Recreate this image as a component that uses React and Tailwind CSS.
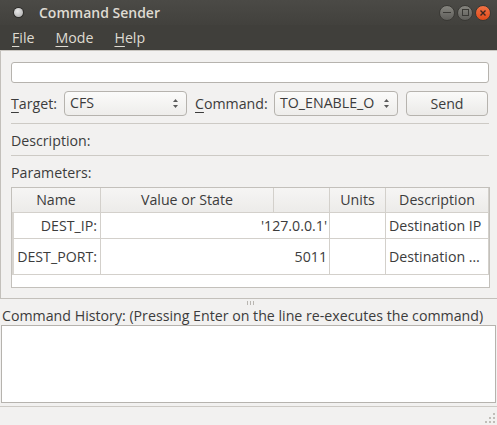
import React from "react";

function Combo({ value, width }) {
  return (
    <div
      className={`${width} h-[25px] flex items-center justify-between rounded-[4px] border border-[#b6b3ae] bg-gradient-to-b from-[#fbfbfa] to-[#eeedeb] pl-[5px] pr-[7px] text-[#3c3c3c]`}
    >
      <span className="leading-none">{value}</span>
      <svg width="7" height="11" viewBox="0 0 7 11">
        <path d="M3.5 1 L6 4 L1 4 Z" fill="#5a5a5a" />
        <path d="M3.5 10 L6 7 L1 7 Z" fill="#5a5a5a" />
      </svg>
    </div>
  );
}

function U({ c, rest }) {
  return (
    <span>
      <span className="underline underline-offset-[3px] decoration-1">{c}</span>
      {rest}
    </span>
  );
}

export default function App() {
  const cell = "border-r border-b border-[#d3d0cb]";
  return (
    <div
      className="w-[497px] h-[425px] bg-[#f2f1f0] flex flex-col overflow-hidden text-[14.2px] text-[#3c3c3c]"
      style={{ fontFamily: '"Open Sans", "Noto Sans", sans-serif' }}
    >
      {/* Title bar */}
      <div className="h-[25px] flex items-center bg-gradient-to-b from-[#4b4a46] to-[#42413d] relative">
        <div className="ml-[14px] w-[9px] h-[9px] rounded-full bg-[radial-gradient(circle_at_40%_35%,#e8e8e8,#a8a8a8)] shadow-[0_0_0_1px_#2e2d2a]" />
        <span className="ml-[16px] text-[#dfdbd2] font-semibold text-[14px] leading-none">Command Sender</span>
        <div className="ml-auto mr-[6px] flex items-center gap-[2px]">
          <div className="w-[16px] h-[16px] rounded-full bg-gradient-to-b from-[#86857f] to-[#5f5e5a] border border-[#3a3935] flex items-center justify-center">
            <div className="w-[8px] h-[1.5px] bg-[#3a3935]" />
          </div>
          <div className="w-[16px] h-[16px] rounded-full bg-gradient-to-b from-[#86857f] to-[#5f5e5a] border border-[#3a3935] flex items-center justify-center">
            <div className="w-[7px] h-[7px] border border-[#3a3935]" />
          </div>
          <div className="w-[16px] h-[16px] rounded-full bg-gradient-to-b from-[#f37244] to-[#df4a17] border border-[#3a3935] flex items-center justify-center">
            <svg width="8" height="8" viewBox="0 0 8 8">
              <path d="M1.5 1.5 L6.5 6.5 M6.5 1.5 L1.5 6.5" stroke="#3a2620" strokeWidth="1.4" />
            </svg>
          </div>
        </div>
      </div>
      {/* Menu bar */}
      <div className="h-[26px] flex items-center bg-[#403f3b] text-[#dfdbd2] border-b border-[#c9c6c1]">
        <span className="ml-[12px]"><U c="F" rest="ile" /></span>
        <span className="ml-[21px]"><U c="M" rest="ode" /></span>
        <span className="ml-[21px]"><U c="H" rest="elp" /></span>
      </div>
      {/* Main panel */}
      <div className="h-[248px] border-l border-b border-[#c3c0bb] flex flex-col pl-[10px] pr-[8px] pt-[11px]">
        <div className="h-[21px] w-[478px] rounded-[3px] border border-[#b6b3ae] bg-white" />
        <div className="mt-[8px] h-[25px] flex items-center">
          <span className="w-[53px]"><U c="T" rest="arget:" /></span>
          <Combo value="CFS" width="w-[123px]" />
          <span className="ml-[8px] w-[79px]"><U c="C" rest="ommand:" /></span>
          <Combo value="TO_ENABLE_O" width="w-[124px]" />
          <div className="ml-[8px] w-[82px] h-[25px] rounded-[4px] border border-[#b6b3ae] bg-gradient-to-b from-[#fafaf9] to-[#ebeae8] flex items-center justify-center">
            Send
          </div>
        </div>
        <div className="mt-[7px] h-px w-[478px] bg-[#cdcac5]" />
        <div className="mt-[8px] h-[18px] leading-[18px]">Description:</div>
        <div className="mt-[5px] h-px w-[478px] bg-[#cdcac5]" />
        <div className="mt-[8px] h-[18px] leading-[18px]">Parameters:</div>
        {/* Table */}
        <div className="mt-[5px] w-[479px] h-[101px] border border-[#c3c0bb] bg-white flex flex-col">
          <div className="grid grid-cols-[89px_173px_56px_56px_103px] h-[25px] bg-gradient-to-b from-[#f6f5f4] to-[#ecebe9]">
            <div className={`${cell} flex items-center justify-center`}>Name</div>
            <div className={`${cell} flex items-center justify-center`}>Value or State</div>
            <div className={`${cell}`} />
            <div className={`${cell} flex items-center justify-center`}>Units</div>
            <div className={`${cell} flex items-center justify-center`}>Description</div>
          </div>
          <div className="grid grid-cols-[89px_229px_56px_103px] h-[26px]">
            <div className={`${cell} border-l-2 border-l-[#d8d5d0] flex items-center justify-end pr-[3px]`}>DEST_IP:</div>
            <div className={`${cell} flex items-center justify-end pr-[2px]`}>'127.0.0.1'</div>
            <div className={cell} />
            <div className={`${cell} flex items-center pl-[3px] whitespace-nowrap overflow-hidden`}>Destination IP</div>
          </div>
          <div className="grid grid-cols-[89px_229px_56px_103px] h-[36px]">
            <div className={`${cell} border-l-2 border-l-[#d8d5d0] flex items-center justify-end pr-[3px]`}>DEST_PORT:</div>
            <div className={`${cell} flex items-center justify-end pr-[2px]`}>5011</div>
            <div className={cell} />
            <div className={`${cell} flex items-center pl-[3px] whitespace-nowrap overflow-hidden`}>Destination …</div>
          </div>
        </div>
      </div>
      {/* Splitter */}
      <div className="h-[7px] flex items-center justify-center gap-[2px] pl-[4px]">
        <div className="w-px h-[4px] bg-[#b9b6b1]" />
        <div className="w-px h-[4px] bg-[#b9b6b1]" />
        <div className="w-px h-[4px] bg-[#b9b6b1]" />
      </div>
      <div className="h-[19px] leading-[19px] pl-[2px] whitespace-nowrap">
        Command History: (Pressing Enter on the line re-executes the command)
      </div>
      <div className="ml-px w-[495px] h-[78px] border border-[#b6b3ae] bg-white" />
      <div className="mt-[3px] h-px bg-[#cdcac5]" />
      <div className="flex-1 relative">
        <div className="absolute right-[2px] bottom-[2px] grid grid-cols-3 gap-[2px]">
          <div />
          <div />
          <div className="w-[2px] h-[2px] bg-[#c0bdb8]" />
          <div />
          <div className="w-[2px] h-[2px] bg-[#c0bdb8]" />
          <div className="w-[2px] h-[2px] bg-[#c0bdb8]" />
          <div className="w-[2px] h-[2px] bg-[#c0bdb8]" />
          <div className="w-[2px] h-[2px] bg-[#c0bdb8]" />
          <div className="w-[2px] h-[2px] bg-[#c0bdb8]" />
        </div>
      </div>
    </div>
  );
}
